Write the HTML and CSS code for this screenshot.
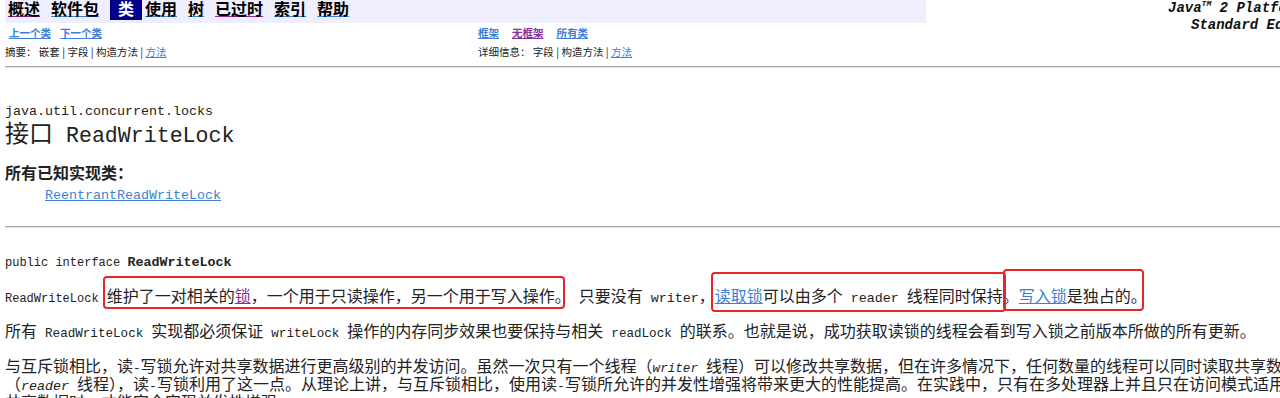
FILE: index.html
```html
<!DOCTYPE html>
<html lang="zh-CN">
<head>
  <meta charset="UTF-8">
  <title>ReadWriteLock</title>
  <link rel="stylesheet" href="styles.css">
</head>
<body>

<div class="page">
  <div class="header">
    <div class="navbar">
      <a class="nav-item visited" href="#">概述</a>
      <a class="nav-item" href="#">软件包</a>
      <span class="nav-item current">类</span>
      <a class="nav-item" href="#">使用</a>
      <a class="nav-item" href="#">树</a>
      <a class="nav-item visited" href="#">已过时</a>
      <a class="nav-item" href="#">索引</a>
      <a class="nav-item" href="#">帮助</a>
    </div>
    <div class="edition">
      <div>Java<sup>TM</sup> 2 Platform</div>
      <div class="ed-second">Standard Ed. 5.0</div>
    </div>
  </div>

  <div class="subnav">
    <div class="subnav-cell links first">
      <a href="#">上一个类</a>
      <a href="#">下一个类</a>
    </div>
    <div class="subnav-cell links">
      <a href="#">框架</a>
      <a class="visited" href="#">无框架</a>
      <a href="#">所有类</a>
    </div>
    <div class="subnav-cell">摘要：&nbsp;嵌套 | 字段 | 构造方法 | <a href="#">方法</a></div>
    <div class="subnav-cell">详细信息：&nbsp;字段 | 构造方法 | <a href="#">方法</a></div>
  </div>

  <hr class="rule">

  <div class="pkg"><span class="lat">java.util.concurrent.locks</span></div>
  <h2 class="title">接口<span class="lat-big"> ReadWriteLock</span></h2>

  <dl class="impl">
    <dt>所有已知实现类：</dt>
    <dd><a class="lat" href="#">ReentrantReadWriteLock</a></dd>
  </dl>

  <hr class="rule rule-2">

  <div class="signature"><code>public interface <b>ReadWriteLock</b></code></div>

  <p class="desc">
    <code>ReadWriteLock</code><span class="lat"> </span>维护了一对相关的<a class="visited" href="#">锁</a>，一个用于只读操作，另一个用于写入操作。<span class="lat"> </span>只要没有<span class="lat"> writer</span>，<a href="#">读取锁</a>可以由多个<span class="lat"> reader </span>线程同时保持。<a href="#">写入锁</a>是独占的。
    <span class="mark mark-1"></span>
    <span class="mark mark-2"></span>
    <span class="mark mark-3"></span>
  </p>

  <p class="text">所有<span class="lat"> </span><span class="tt">ReadWriteLock</span><span class="lat"> </span>实现都必须保证<span class="lat"> </span><span class="tt">writeLock</span><span class="lat"> </span>操作的内存同步效果也要保持与相关<span class="lat"> </span><span class="tt">readLock</span><span class="lat"> </span>的联系。也就是说，成功获取读锁的线程会看到写入锁之前版本所做的所有更新。</p>

  <p class="text">与互斥锁相比，读<span class="tt">-</span>写锁允许对共享数据进行更高级别的并发访问。虽然一次只有一个线程（<i class="tt">writer</i><span class="lat"> </span>线程）可以修改共享数据，但在许多情况下，任何数量的线程可以同时读取共享数据（<i class="lat">reader</i><span class="lat"> </span>线程），读<span class="lat">-</span>写锁利用了这一点。从理论上讲，与互斥锁相比，使用读<span class="lat">-</span>写锁所允许的并发性增强将带来更大的性能提高。在实践中，只有在多处理器上并且只在访问模式适用于共享数据时，才能完全实现并发性增强。</p>
</div>

</body>
</html>
```

FILE: styles.css
```css
html {
  overflow: hidden;
}
body {
  margin: 0;
  font-family: "Noto Sans CJK SC", "Liberation Mono", monospace;
  font-size: 16px;
  color: #222;
  background: #fff;
}
a {
  color: #3d7fd6;
}
a.visited {
  color: #892d9b;
}
.page {
  width: 1302px;
  padding-left: 5px;
}
.lat {
  font-family: "Liberation Mono", monospace;
  font-size: 13.33px;
  line-height: 0;
}
.tt {
  font-family: "Liberation Mono", monospace;
  font-size: 12.6px;
  line-height: 0;
}
code {
  font-family: "Liberation Mono", monospace;
  font-size: 12px;
  line-height: 0;
}
code b {
  font-size: 13.33px;
}

/* top navigation */
.header {
  display: flex;
  align-items: flex-start;
  height: 23px;
}
.navbar {
  display: flex;
  gap: 11px;
  flex-shrink: 0;
  width: 918px;
  height: 23px;
  padding-left: 3px;
  background: #eeeeff;
  line-height: 16px;
  font-weight: bold;
}
.navbar .nav-item {
  color: #000;
  text-decoration: underline;
  text-decoration-color: #3d7fd6;
}
.navbar .nav-item.visited {
  text-decoration-color: #892d9b;
}
.navbar .nav-item.current {
  padding: 0 8px;
  margin-right: -8px;
  height: 20px;
  background: #00008b;
  color: #fff;
  text-decoration: none;
}
.edition {
  flex-shrink: 0;
  margin-left: 242px;
  white-space: nowrap;
  font-family: "Liberation Mono", monospace;
  font-size: 14px;
  font-weight: bold;
  font-style: italic;
  line-height: 17px;
  color: #111;
}
.edition sup {
  font-size: 8px;
  line-height: 0;
}
.ed-second {
  padding-left: 23px;
}

.subnav {
  display: grid;
  grid-template-columns: 473px 1fr;
  row-gap: 6px;
  padding-top: 3px;
  font-size: 10.5px;
  line-height: 13px;
}
.subnav-cell.links {
  display: flex;
  gap: 13px;
  font-weight: bold;
}
.subnav-cell.first {
  gap: 9px;
  padding-left: 4px;
}

.rule {
  height: 0;
  margin: 8px 0 0;
  border: 0;
  border-top: 1px solid #a3a3a3;
  border-bottom: 1px solid #e6e6e6;
}

.pkg {
  margin-top: 32px;
  line-height: 16px;
}
.title {
  margin: 2px 0 0;
  font-size: 24px;
  font-weight: normal;
  line-height: 28px;
}
.lat-big {
  font-family: "Liberation Mono", monospace;
  font-size: 21.6px;
  line-height: 0;
}

.impl {
  margin: 17px 0 0;
  line-height: 18px;
}
.impl dt {
  font-weight: bold;
}
.impl dd {
  margin: 2px 0 0 40px;
}

.rule-2 {
  margin-top: 25px;
}

.signature {
  margin-top: 22px;
  line-height: 18px;
}

.desc,
.text {
  margin: 18px 0 0;
  line-height: 18px;
}
.desc {
  position: relative;
}
.text {
  margin-top: 17px;
}

/* red annotation frames */
.mark {
  position: absolute;
  border: 2.5px solid #e8262a;
  border-radius: 4px;
}
.mark-1 {
  left: 98px;
  top: -10px;
  width: 458px;
  height: 29px;
}
.mark-2 {
  left: 706px;
  top: -14px;
  width: 291px;
  height: 36px;
}
.mark-3 {
  left: 998px;
  top: -17px;
  width: 137px;
  height: 38px;
}
```
